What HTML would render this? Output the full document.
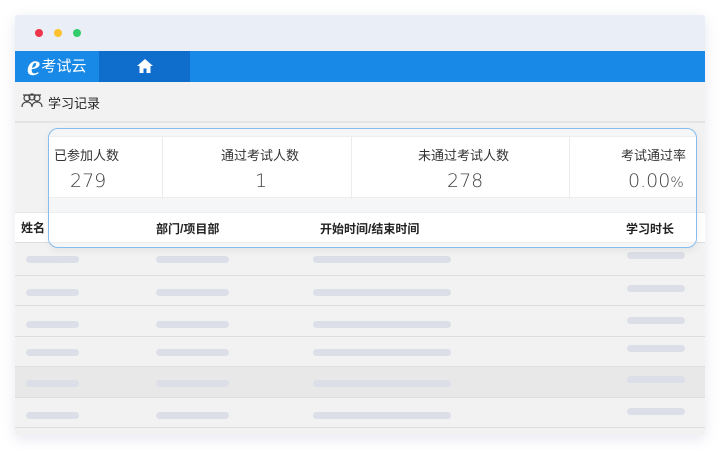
<!DOCTYPE html>
<html><head><meta charset="utf-8"><style>
*{margin:0;padding:0;box-sizing:border-box}
body{width:720px;height:450px;background:#fff;position:relative;overflow:hidden;font-family:"Liberation Sans","Noto Sans CJK SC",sans-serif;color:#222}
.win{position:absolute;left:15px;top:15px;width:690px;height:420px;background:#f2f2f2;box-shadow:0 4px 14px rgba(120,130,170,.18);border-radius:3px;overflow:hidden}
.tb{position:absolute;left:0;top:0;width:690px;height:36px;background:#eaeef6}
.dot{position:absolute;top:14px;width:8px;height:8px;border-radius:50%}
.nav{position:absolute;left:0;top:36px;width:690px;height:31px;background:#1889e6}
.home{position:absolute;left:84px;top:0;width:91px;height:31px;background:#0f6dcc}
.logo{position:absolute;left:12px;top:3px;color:#fff;font-size:15px;line-height:24px}
.logo b{font-family:"Liberation Serif",serif;font-style:italic;font-size:30px;font-weight:bold;vertical-align:-4px;margin-right:1px}
.sub{position:absolute;left:0;top:67px;width:690px;height:40px;background:#f2f2f2;border-bottom:1px solid #e4e4e4}
.sub span{position:absolute;left:33px;top:11px;font-size:13px}
.row{position:absolute;left:0;width:690px;border-bottom:1px solid #dedede}
.bar{position:absolute;height:7px;border-radius:4px;background:#dddfe8}
.card{position:absolute;left:48px;top:128px;width:649px;height:120px;border:1px solid #86bcee;border-radius:10px;background:#f5f6f8;overflow:hidden;box-shadow:0 3px 8px rgba(0,0,0,.06)}
.stats{position:absolute;left:0;top:7px;width:649px;height:62px;background:#fff;border-top:1px solid #eee;border-bottom:1px solid #eee}
.st{position:absolute;top:0;height:62px;border-right:1px solid #ececec}
.st .l{position:absolute;top:8px;font-size:13px;color:#333}
.st .v{position:absolute;top:33px;font-size:19px;color:#444;font-family:"DejaVu Sans",sans-serif;font-weight:300}
.hdr{position:absolute;left:0;top:83px;width:649px;height:31px;background:#fff;border-top:1px solid #eee;border-bottom:1px solid #eee}
.h{position:absolute;top:219px;font-size:12px;font-weight:bold;color:#222}
</style></head><body>
<div class="win">
 <div class="tb"><div class="dot" style="left:20px;background:#f0364a"></div><div class="dot" style="left:39px;background:#fdc12d"></div><div class="dot" style="left:58px;background:#34cd6c"></div></div>
 <div class="nav"><div class="logo"><b>e</b>考试云</div><div class="home">
  <svg style="position:absolute;left:37px;top:7px" width="18" height="16" viewBox="0 0 18 16"><path d="M9 1L1 8h2.5v7h4v-4.5h3V15h4V8H17z" fill="#fff"/></svg></div></div>
 <div class="sub">
  <svg style="position:absolute;left:6px;top:10px" width="22" height="16" viewBox="0 0 22 16" fill="none" stroke="#444" stroke-width="1.2"><circle cx="6" cy="6" r="3"/><circle cx="11" cy="5" r="3"/><circle cx="16" cy="6" r="3"/><path d="M1 15c0-4 3-5 5-5s5 1 5 5M11 15c0-4 3-5 5-5s5 1 5 5"/><path d="M2 3h18"/></svg>
  <span>学习记录</span></div>
</div>
<div class="row" style="top:243px;height:33px;background:#f2f2f2;left:15px"></div>
<div class="row" style="top:276px;height:30px;background:#f2f2f2;left:15px"></div>
<div class="row" style="top:306px;height:31px;background:#f2f2f2;left:15px"></div>
<div class="row" style="top:337px;height:30px;background:#f2f2f2;left:15px"></div>
<div class="row" style="top:367px;height:31px;background:#e8e8e8;left:15px"></div>
<div class="row" style="top:398px;height:30px;background:#f2f2f2;left:15px"></div>
<div class="row" style="top:122px;height:91px;background:#f2f2f2;left:15px;border-top:1px solid #e4e4e4"></div>
<div class="row" style="top:212px;height:31px;background:#fff;left:15px;border-top:1px solid #e6e6e6"></div>
<div class="h" style="left:21px">姓名</div>
<div class="bar" style="left:26px;top:256px;width:53px"></div><div class="bar" style="left:156px;top:256px;width:73px"></div><div class="bar" style="left:313px;top:256px;width:138px"></div><div class="bar" style="left:627px;top:252px;width:58px"></div>
<div class="bar" style="left:26px;top:289px;width:53px"></div><div class="bar" style="left:156px;top:289px;width:73px"></div><div class="bar" style="left:313px;top:289px;width:138px"></div><div class="bar" style="left:627px;top:285px;width:58px"></div>
<div class="bar" style="left:26px;top:321px;width:53px"></div><div class="bar" style="left:156px;top:321px;width:73px"></div><div class="bar" style="left:313px;top:321px;width:138px"></div><div class="bar" style="left:627px;top:317px;width:58px"></div>
<div class="bar" style="left:26px;top:349px;width:53px"></div><div class="bar" style="left:156px;top:349px;width:73px"></div><div class="bar" style="left:313px;top:349px;width:138px"></div><div class="bar" style="left:627px;top:345px;width:58px"></div>
<div class="bar" style="left:26px;top:380px;width:53px"></div><div class="bar" style="left:156px;top:380px;width:73px"></div><div class="bar" style="left:313px;top:380px;width:138px"></div><div class="bar" style="left:627px;top:376px;width:58px"></div>
<div class="bar" style="left:26px;top:412px;width:53px"></div><div class="bar" style="left:156px;top:412px;width:73px"></div><div class="bar" style="left:313px;top:412px;width:138px"></div><div class="bar" style="left:627px;top:408px;width:58px"></div>
<div class="card">
 <div class="stats">
  <div class="st" style="left:0;width:114px"><div class="l" style="left:5px">已参加人数</div><div class="v" style="left:21px">279</div></div>
  <div class="st" style="left:114px;width:189px"><div class="l" style="left:58px">通过考试人数</div><div class="v" style="left:92px">1</div></div>
  <div class="st" style="left:303px;width:218px"><div class="l" style="left:66px">未通过考试人数</div><div class="v" style="left:95px">278</div></div>
  <div class="st" style="left:521px;width:128px;border:0"><div class="l" style="left:51px">考试通过率</div><div class="v" style="left:58px">0.00<span style="font-size:14px">%</span></div></div>
 </div>
 <div class="hdr">
  <div class="h" style="top:7px;left:107px">部门/项目部</div>
  <div class="h" style="top:7px;left:271px">开始时间/结束时间</div>
  <div class="h" style="top:7px;left:577px">学习时长</div>
 </div>
</div>
</body></html>
